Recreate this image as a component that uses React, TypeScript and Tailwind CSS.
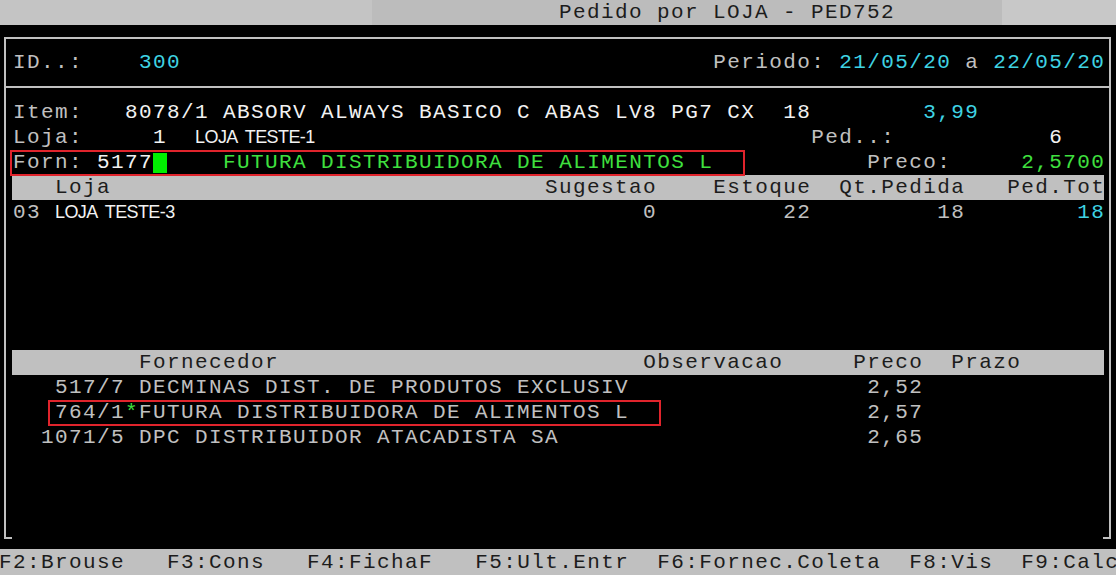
import type { ReactNode } from 'react';

type Seg = { c: number; t: string; k?: string; kind?: 'prop' | 'block' };

const G = 'text-[#c0c0c0]';
const W = 'text-[#f2f2f2]';
const C = 'text-[#3fd3e3]';
const N = 'text-[#3fe03f]';

// one terminal row: segments are placed on a 14px character grid
function Line({ segs, className = '', children }: { segs: Seg[]; className?: string; children?: ReactNode }) {
  const out: ReactNode[] = [];
  let col = 0;
  segs.forEach((s, i) => {
    if (s.c > col) out.push(' '.repeat(s.c - col));
    if (s.kind === 'prop') {
      out.push(
        <span
          key={i}
          className={`inline-block w-[168px] font-['Liberation_Sans',sans-serif] text-[18px] tracking-[-0.6px] [word-spacing:4px] ${s.k ?? ''}`}
        >
          {s.t}
        </span>
      );
    } else if (s.kind === 'block') {
      out.push(<span key={i} className="inline-block h-[20px] w-[14px] bg-[#00f000] align-[-5px]" />);
    } else {
      out.push(
        <span key={i} className={s.k}>
          {s.t}
        </span>
      );
    }
    col = s.c + s.t.length;
  });
  return (
    <div className={`relative h-[25px] whitespace-pre ${className}`}>
      {out}
      {children}
    </div>
  );
}

export default function App() {
  return (
    <div className="h-[575px] w-[1116px] overflow-hidden bg-black font-['Liberation_Mono',monospace] text-[21px] leading-[25px] tracking-[1.4px]">
      {/* TITLE BAR */}
      <div className="flex h-[25px] text-[#1c1c1c]">
        <div className="w-[372px] bg-[#c4c4c4]" />
        <div className="flex-1 whitespace-pre bg-[#bcbcbc] pl-[187px]">Pedido por LOJA - PED752</div>
        <div className="w-[114px] bg-[#c8c8c8]" />
      </div>

      <div className="h-[12px]" />

      {/* MAIN BOX */}
      <div className="ml-[4px] w-[1107px] border-x-2 border-t-2 border-[#c0c0c0]">
        <div className="h-[47px] pt-[11px]">
          <Line
            className="ml-[-7px]"
            segs={[
              { c: 1, t: 'ID..:', k: G },
              { c: 10, t: '300', k: C },
              { c: 51, t: 'Periodo:', k: G },
              { c: 60, t: '21/05/20', k: C },
              { c: 68, t: ' a ', k: G },
              { c: 71, t: '22/05/20', k: C },
            ]}
          />
        </div>
        <div className="h-[2px] bg-[#c0c0c0]" />

        <div className="pt-[12px]">
          <Line
            className="ml-[-7px]"
            segs={[
              { c: 1, t: 'Item:', k: G },
              { c: 9, t: '8078/1 ABSORV ALWAYS BASICO C ABAS LV8 PG7 CX  18', k: W },
              { c: 66, t: '3,99', k: C },
            ]}
          />
          <Line
            className="ml-[-7px]"
            segs={[
              { c: 1, t: 'Loja:', k: G },
              { c: 11, t: '1', k: W },
              { c: 14, t: 'LOJA TESTE-1', k: W, kind: 'prop' },
              { c: 58, t: 'Ped..:', k: G },
              { c: 75, t: '6', k: W },
            ]}
          />
          <Line
            className="ml-[-7px]"
            segs={[
              { c: 1, t: 'Forn:', k: G },
              { c: 7, t: '5177', k: W },
              { c: 11, t: ' ', kind: 'block' },
              { c: 16, t: 'FUTURA DISTRIBUIDORA DE ALIMENTOS L', k: N },
              { c: 62, t: 'Preco:', k: G },
              { c: 73, t: '2,5700', k: N },
            ]}
          >
            <div className="pointer-events-none absolute left-[11px] top-0 h-[26px] w-[735px] border-2 border-[#e0242c]" />
          </Line>

          <div className="ml-[6px] w-[1092px] bg-[#c0c0c0] text-[#1c1c1c]">
            <Line
              className="ml-[-13px]"
              segs={[
                { c: 4, t: 'Loja' },
                { c: 39, t: 'Sugestao' },
                { c: 51, t: 'Estoque' },
                { c: 60, t: 'Qt.Pedida' },
                { c: 72, t: 'Ped.Tot' },
              ]}
            />
          </div>
          <Line
            className="ml-[-7px]"
            segs={[
              { c: 1, t: '03', k: G },
              { c: 4, t: 'LOJA TESTE-3', k: W, kind: 'prop' },
              { c: 46, t: '0', k: G },
              { c: 56, t: '22', k: G },
              { c: 67, t: '18', k: G },
              { c: 77, t: '18', k: C },
            ]}
          />

          <div className="h-[125px]" />

          {/* FORNECEDORES */}
          <div className="ml-[6px] w-[1092px] bg-[#c0c0c0] text-[#1c1c1c]">
            <Line
              className="ml-[-13px]"
              segs={[
                { c: 10, t: 'Fornecedor' },
                { c: 46, t: 'Observacao' },
                { c: 61, t: 'Preco' },
                { c: 68, t: 'Prazo' },
              ]}
            />
          </div>
          <Line
            className="ml-[-7px]"
            segs={[
              { c: 4, t: '517/7 DECMINAS DIST. DE PRODUTOS EXCLUSIV', k: G },
              { c: 62, t: '2,52', k: G },
            ]}
          />
          <Line
            className="ml-[-7px]"
            segs={[
              { c: 4, t: '764/1', k: G },
              { c: 9, t: '*', k: N },
              { c: 10, t: 'FUTURA DISTRIBUIDORA DE ALIMENTOS L', k: G },
              { c: 62, t: '2,57', k: G },
            ]}
          >
            <div className="pointer-events-none absolute left-[49px] top-0 h-[26px] w-[613px] border-2 border-[#e0242c]" />
          </Line>
          <Line
            className="ml-[-7px]"
            segs={[
              { c: 3, t: '1071/5 DPC DISTRIBUIDOR ATACADISTA SA', k: G },
              { c: 62, t: '2,65', k: G },
            ]}
          />

          <div className="h-[87px]" />
        </div>

        <div className="flex h-[2px] justify-between">
          <div className="w-[6px] bg-[#c0c0c0]" />
          <div className="w-[6px] bg-[#c0c0c0]" />
        </div>
      </div>

      <div className="h-[10px]" />

      {/* FUNCTION KEYS */}
      <div className="h-[26px] bg-[#c0c0c0] pt-[1px] text-[#1c1c1c]">
        <Line
          className="ml-[-1px]"
          segs={[
            { c: 0, t: 'F2:Brouse' },
            { c: 12, t: 'F3:Cons' },
            { c: 22, t: 'F4:FichaF' },
            { c: 34, t: 'F5:Ult.Entr' },
            { c: 47, t: 'F6:Fornec.Coleta' },
            { c: 65, t: 'F8:Vis' },
            { c: 73, t: 'F9:Calc' },
          ]}
        />
      </div>
    </div>
  );
}
